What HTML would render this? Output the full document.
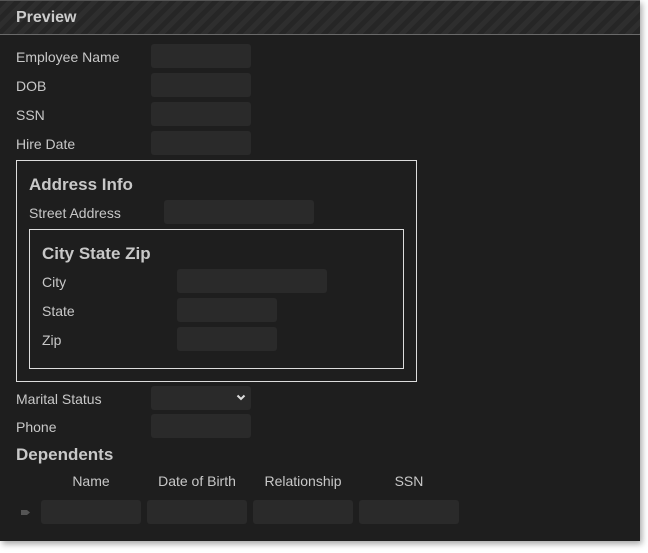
<!DOCTYPE html>
<html><head><style>
body{margin:0;background:#fff;width:648px;height:553px;overflow:hidden;font-family:"Liberation Sans",sans-serif;}
.panel{position:absolute;left:0;top:0;width:640px;height:541px;background:#1e1e1e;box-shadow:2px 3px 6px rgba(0,0,0,.35);}
.hdr{position:absolute;left:0;top:0;width:640px;height:35px;border-top:1px solid #555;border-bottom:1px solid #6a6a6a;box-sizing:border-box;
background:repeating-linear-gradient(135deg,#262626 0 5px,#2e2e2e 5px 10px);}
.hdr span{position:absolute;left:16px;top:8px;color:#ccc;font-weight:bold;font-size:16px;}
.t{position:absolute;color:#c8c8c8;font-size:14px;line-height:16px;}
.b{position:absolute;color:#c8c8c8;font-size:17px;font-weight:bold;}
.i{position:absolute;height:24px;background:#2a2a2a;border-radius:3px;}
.fs{position:absolute;border:1px solid #ddd;box-sizing:border-box;}
</style></head><body>
<div class="panel">
<div class="hdr"><span>Preview</span></div>
<div class="t" style="left:16px;top:49px">Employee Name</div><div class="i" style="left:151px;top:44px;width:100px"></div>
<div class="t" style="left:16px;top:78px">DOB</div><div class="i" style="left:151px;top:73px;width:100px"></div>
<div class="t" style="left:16px;top:107px">SSN</div><div class="i" style="left:151px;top:102px;width:100px"></div>
<div class="t" style="left:16px;top:136px">Hire Date</div><div class="i" style="left:151px;top:131px;width:100px"></div>
<div class="fs" style="left:16px;top:160px;width:401px;height:222px"></div>
<div class="b" style="left:29px;top:175px">Address Info</div>
<div class="t" style="left:29px;top:205px">Street Address</div><div class="i" style="left:164px;top:200px;width:150px"></div>
<div class="fs" style="left:29px;top:229px;width:375px;height:140px"></div>
<div class="b" style="left:42px;top:244px">City State Zip</div>
<div class="t" style="left:42px;top:274px">City</div><div class="i" style="left:177px;top:269px;width:150px"></div>
<div class="t" style="left:42px;top:303px">State</div><div class="i" style="left:177px;top:298px;width:100px"></div>
<div class="t" style="left:42px;top:332px">Zip</div><div class="i" style="left:177px;top:327px;width:100px"></div>
<div class="t" style="left:16px;top:391px">Marital Status</div><div class="i" style="left:151px;top:386px;width:100px"><svg style="position:absolute;left:85px;top:8px" width="10" height="8" viewBox="0 0 10 8"><path d="M1.5 1.5 L5 5 L8.5 1.5" stroke="#ddd" stroke-width="2" fill="none"/></svg></div>
<div class="t" style="left:16px;top:419px">Phone</div><div class="i" style="left:151px;top:414px;width:100px"></div>
<div class="b" style="left:16px;top:445px">Dependents</div>
<div class="t" style="left:41px;top:473px;width:100px;text-align:center">Name</div>
<div class="t" style="left:147px;top:473px;width:100px;text-align:center">Date of Birth</div>
<div class="t" style="left:253px;top:473px;width:100px;text-align:center">Relationship</div>
<div class="t" style="left:359px;top:473px;width:100px;text-align:center">SSN</div>
<svg style="position:absolute;left:21px;top:509px" width="10" height="7"><path d="M0 1 H6 L9 3.5 L6 6 H0Z" fill="#555"/></svg>
<div class="i" style="left:41px;top:500px;width:100px"></div>
<div class="i" style="left:147px;top:500px;width:100px"></div>
<div class="i" style="left:253px;top:500px;width:100px"></div>
<div class="i" style="left:359px;top:500px;width:100px"></div>
</div>
</body></html>
